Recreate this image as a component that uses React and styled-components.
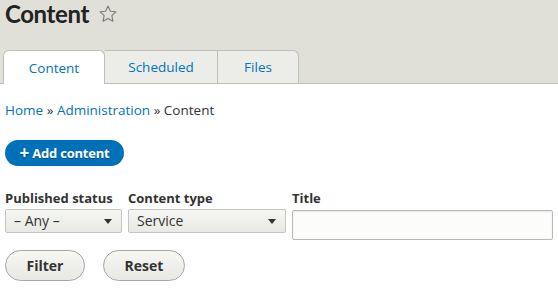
import React from 'react';
import styled, { createGlobalStyle } from 'styled-components';

const GlobalStyle = createGlobalStyle`
  html, body {
    margin: 0;
    padding: 0;
    background: #ffffff;
  }
  body {
    font-family: "Open Sans", "Noto Sans", sans-serif;
    color: #333333;
    font-size: 13px;
  }
`;

const Header = styled.header`
  background: #e0e0d8;
  padding: 0 0 0 3px;
  border-bottom: 1px solid #bfbfba;
`;

const PageTitle = styled.h1`
  margin: 0;
  padding: 0 0 0 2px;
  height: 50px;
  display: flex;
  align-items: flex-start;
  gap: 9px;
  font-family: Lato, "Open Sans", sans-serif;
  font-size: 24px;
  line-height: 28px;
  font-weight: 700;
  letter-spacing: -0.4px;
  color: #222222;
`;

const Star = styled.svg`
  width: 20px;
  height: 20px;
  margin-top: 4px;
`;

const Tabs = styled.nav`
  display: flex;
  height: 33px;
`;

const Tab = styled.a`
  display: flex;
  align-items: center;
  justify-content: center;
  width: ${p => p.$width}px;
  box-sizing: border-box;
  height: ${p => (p.$active ? 34 : 33)}px;
  margin-bottom: ${p => (p.$active ? -1 : 0)}px;
  background: ${p => (p.$active ? '#ffffff' : '#ecece9')};
  border: 1px solid #bfbfba;
  border-bottom: none;
  border-left: ${p => (p.$active || p.$first ? '1px solid #bfbfba' : 'none')};
  border-radius: ${p => (p.$active || p.$last ? '6px 6px 0 0' : '0')};
  ${p => (p.$last ? 'border-top-left-radius: 0;' : '')}
  color: #0074bd;
  font-size: 13.5px;
  text-decoration: none;
`;

const Main = styled.main`
  padding: 0 5px;
`;

const Breadcrumb = styled.div`
  padding-top: 16px;
  height: 20px;
  line-height: 20px;
  font-size: 13.5px;
  color: #333333;

  a {
    color: #0074bd;
    text-decoration: none;
  }
`;

const PrimaryButton = styled.button`
  margin-top: 20px;
  height: 26px;
  width: 119px;
  padding: 0;
  border: none;
  border-radius: 13px;
  background: #0071b8;
  color: #ffffff;
  font-family: inherit;
  font-size: 13px;
  font-weight: 700;
  letter-spacing: -0.2px;
  text-shadow: 0 1px 0 rgba(0, 0, 0, 0.3);

  span {
    font-size: 17px;
    font-weight: 700;
    line-height: 0;
    vertical-align: -1px;
  }
`;

const Filters = styled.form`
  margin-top: 23px;
  display: flex;
  gap: 6px;
  align-items: flex-start;
`;

const Field = styled.div`
  display: flex;
  flex-direction: column;
`;

const Label = styled.label`
  font-size: 13px;
  font-weight: 700;
  line-height: 18px;
  margin-bottom: 2px;
  color: #333333;
`;

const SelectBox = styled.div`
  position: relative;
  box-sizing: border-box;
  width: ${p => p.$width}px;
  height: 24px;
  border: 1px solid #c4c4c0;
  border-radius: 2px;
  background: linear-gradient(#f6f6f3, #e8e8e4);
  padding: 0 0 0 8px;
  line-height: 22px;
  font-size: 14px;
  color: #333333;
`;

const Arrow = styled.span`
  position: absolute;
  right: 9px;
  top: 9px;
  width: 0;
  height: 0;
  border-left: 4px solid transparent;
  border-right: 4px solid transparent;
  border-top: 5px solid #333333;
`;

const TextInput = styled.input`
  box-sizing: border-box;
  width: 261px;
  height: 30px;
  margin-top: 1px;
  border: 1px solid #b8b8b8;
  border-radius: 2px;
  background: #fcfcfa;
  box-shadow: inset 0 1px 2px rgba(0, 0, 0, 0.08);
`;

const Actions = styled.div`
  margin-top: 10px;
  display: flex;
  gap: 18px;
`;

const Button = styled.button`
  box-sizing: border-box;
  width: ${p => p.$width}px;
  height: 31px;
  padding: 0;
  border: 1px solid #a6a6a6;
  border-radius: 16px;
  background: linear-gradient(#f6f6f3, #e8e8e4);
  color: #333333;
  font-family: inherit;
  font-size: 14px;
  font-weight: 700;
`;

function App() {
  return (
    <>
      <GlobalStyle />
      <Header>
        <PageTitle>
          Content
          <Star viewBox="0 0 24 24">
            <path
              d="M12 2.5l2.9 6.1 6.6.8-4.9 4.6 1.3 6.6L12 17.3l-5.9 3.3 1.3-6.6-4.9-4.6 6.6-.8z"
              fill="none"
              stroke="#7a7a76"
              strokeWidth="1.3"
              strokeLinejoin="round"
            />
          </Star>
        </PageTitle>
        <Tabs>
          <Tab $active $width={102}>Content</Tab>
          <Tab $width={113}>Scheduled</Tab>
          <Tab $last $width={81}>Files</Tab>
        </Tabs>
      </Header>
      <Main>
        <Breadcrumb>
          <a href="#">Home</a> » <a href="#">Administration</a> » Content
        </Breadcrumb>
        <PrimaryButton><span>+</span> Add content</PrimaryButton>
        <Filters>
          <Field>
            <Label>Published status</Label>
            <SelectBox $width={117}>
              – Any –
              <Arrow />
            </SelectBox>
          </Field>
          <Field>
            <Label>Content type</Label>
            <SelectBox $width={158}>
              Service
              <Arrow />
            </SelectBox>
          </Field>
          <Field>
            <Label>Title</Label>
            <TextInput type="text" />
          </Field>
        </Filters>
        <Actions>
          <Button $width={80}>Filter</Button>
          <Button $width={82}>Reset</Button>
        </Actions>
      </Main>
    </>
  );
}

export default App;
